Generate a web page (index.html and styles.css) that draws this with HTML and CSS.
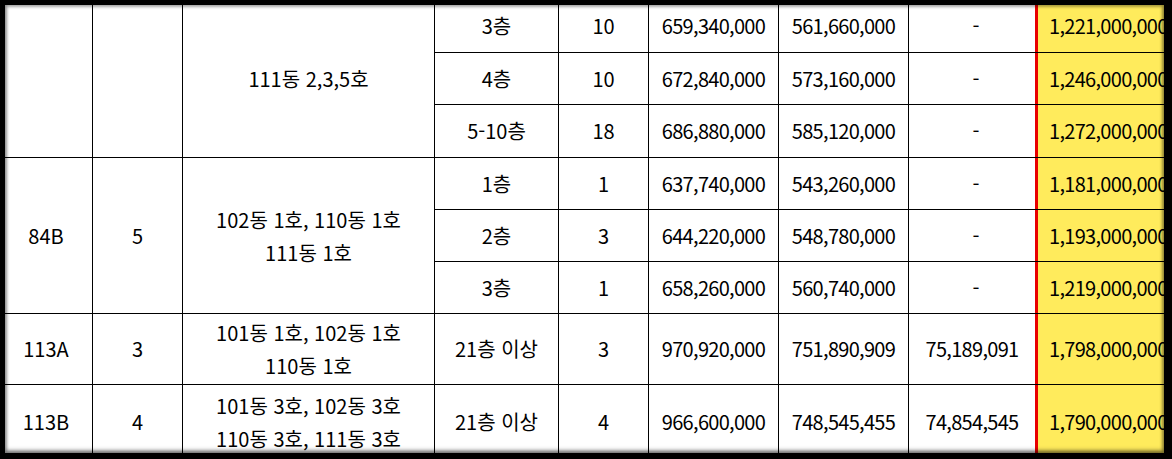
FILE: index.html
```html
<!DOCTYPE html>
<html lang="ko">
<head>
<meta charset="utf-8">
<title>분양가 표</title>
<link rel="stylesheet" href="styles.css">
</head>
<body>
<div class="sheet">
  <div class="grid">
    <div class="c r3"></div>
    <div class="c r3"></div>
    <div class="c r3">111동 2,3,5호</div>
    <div class="c">3층</div><div class="c">10</div><div class="c n">659,340,000</div><div class="c n">561,660,000</div><div class="c dash">-</div><div class="c n y">1,221,000,000</div>
    <div class="c">4층</div><div class="c">10</div><div class="c n">672,840,000</div><div class="c n">573,160,000</div><div class="c dash">-</div><div class="c n y">1,246,000,000</div>
    <div class="c">5-10층</div><div class="c">18</div><div class="c n">686,880,000</div><div class="c n">585,120,000</div><div class="c dash">-</div><div class="c n y">1,272,000,000</div>

    <div class="c r3">84B</div>
    <div class="c r3">5</div>
    <div class="c r3 multi"><span>102동 1호, 110동 1호</span><span>111동 1호</span></div>
    <div class="c">1층</div><div class="c">1</div><div class="c n">637,740,000</div><div class="c n">543,260,000</div><div class="c dash">-</div><div class="c n y">1,181,000,000</div>
    <div class="c">2층</div><div class="c">3</div><div class="c n">644,220,000</div><div class="c n">548,780,000</div><div class="c dash">-</div><div class="c n y">1,193,000,000</div>
    <div class="c">3층</div><div class="c">1</div><div class="c n">658,260,000</div><div class="c n">560,740,000</div><div class="c dash">-</div><div class="c n y">1,219,000,000</div>

    <div class="c">113A</div>
    <div class="c">3</div>
    <div class="c multi"><span>101동 1호, 102동 1호</span><span>110동 1호</span></div>
    <div class="c">21층 이상</div><div class="c">3</div><div class="c n">970,920,000</div><div class="c n">751,890,909</div><div class="c n">75,189,091</div><div class="c n y">1,798,000,000</div>

    <div class="c">113B</div>
    <div class="c">4</div>
    <div class="c multi"><span>101동 3호, 102동 3호</span><span>110동 3호, 111동 3호</span></div>
    <div class="c">21층 이상</div><div class="c">4</div><div class="c n">966,600,000</div><div class="c n">748,545,455</div><div class="c n">74,854,545</div><div class="c n y">1,790,000,000</div>
  </div>
  <div class="frame"></div>
</div>
</body>
</html>
```
FILE: styles.css
```css
html, body {
  margin: 0;
  padding: 0;
  background: #000;
}

.sheet {
  position: relative;
  width: 1172px;
  height: 459px;
  overflow: hidden;
  background: #fff;
}

.grid {
  display: grid;
  grid-template-columns: 92px 89px 251px 123px 89px 129px 129px 126px 140px;
  grid-template-rows: 52px 51px 52px 51px 51px 51px 70px 74px;
  gap: 1px;
  width: max-content;
  background: #000;
  font-family: "Noto Sans CJK KR", "Noto Sans", sans-serif;
  font-size: 20px;
  color: #000;
}

.c {
  display: flex;
  align-items: center;
  justify-content: center;
  background: #fff;
  white-space: nowrap;
  line-height: 1;
}

.n {
  letter-spacing: -0.7px;
}

.r3 {
  grid-row: span 3;
}

.multi {
  flex-direction: column;
  line-height: 33px;
}

.dash {
  padding-left: 8px;
}

.y {
  background: #ffeb5c;
  border-left: 2px solid #e80000;
  box-shadow: -1px 0 0 #e80000;
  justify-content: flex-start;
  padding-left: 11px;
}

.frame {
  position: absolute;
  inset: 0;
  border-style: solid;
  border-color: #000;
  border-width: 5px 8px 6px 5px;
  box-shadow: inset 0 0 3px 2px rgba(0, 0, 0, 0.35), inset 0 -3px 4px rgba(0, 0, 0, 0.3);
  pointer-events: none;
}
```
